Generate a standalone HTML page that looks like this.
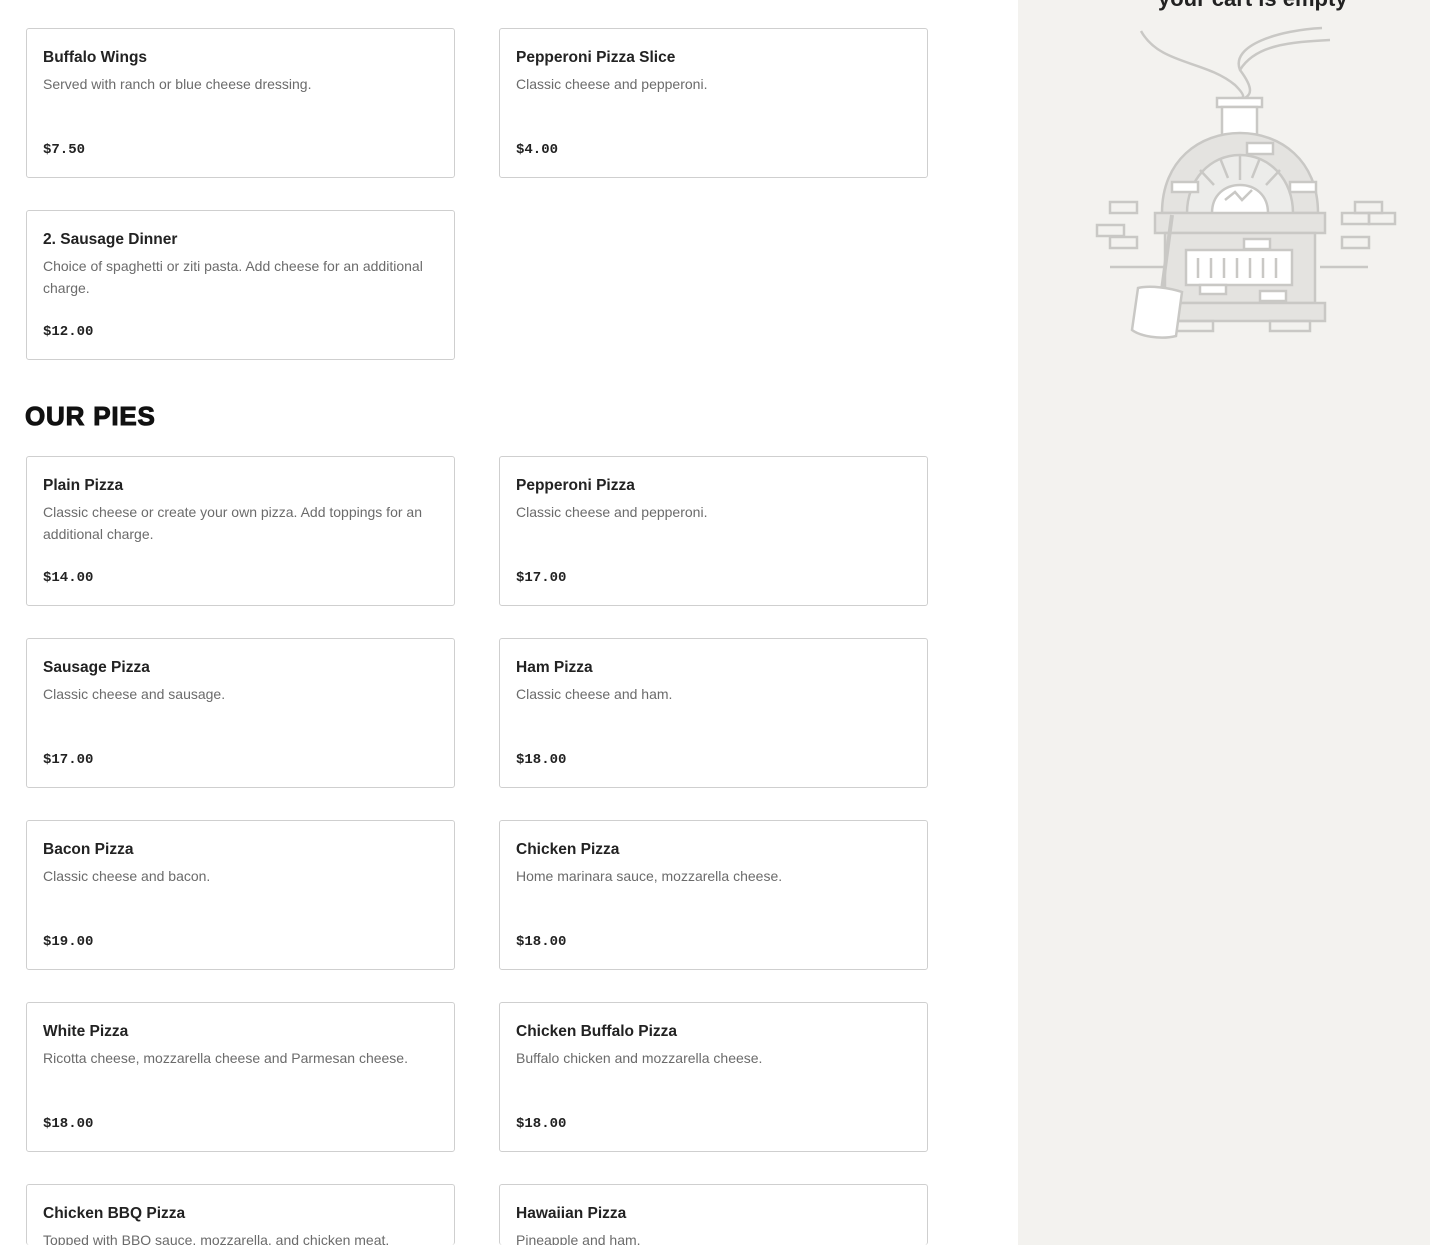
<!DOCTYPE html>
<html style="width:1430px;height:1245px;overflow:hidden"><head><meta charset="utf-8"><style>
*{box-sizing:border-box;margin:0;padding:0}
body{width:1430px;height:1245px;overflow:hidden;background:#fff;font-family:"Liberation Sans",sans-serif;position:relative}
.card{position:absolute;width:429px;height:150px;border:1px solid #cfcfcf;border-radius:3px;background:#fff}
.card h3{position:absolute;left:16px;top:20px;font-size:15.5px;font-weight:bold;color:#222}
.card p{position:absolute;left:16px;top:44px;right:14px;font-size:14px;line-height:22px;color:#6b6b6b}
.card .pr{position:absolute;left:16px;top:113px;font-family:"Liberation Mono",monospace;font-weight:bold;font-size:14px;color:#222}
.side{position:absolute;left:1018px;top:0;width:412px;height:1245px;background:#f3f2ef}
h2{position:absolute;left:25px;top:401px;font-size:26px;font-weight:900;color:#111;letter-spacing:0.8px;-webkit-text-stroke:1px #111}
</style></head><body>
<div class="side">
<div style="position:absolute;left:140px;top:-14px;font-size:22px;font-weight:bold;color:#222">your cart is empty</div>
<svg style="position:absolute;left:72px;top:0" width="320" height="350" viewBox="1090 0 320 350" fill="none" stroke="#c9c8c5" stroke-width="2.5">
<path d="M1141 31 C1160 65 1205 60 1235 85 C1250 100 1240 98 1238 98"/>
<path d="M1322 28 C1280 30 1230 45 1240 70 C1255 90 1250 95 1245 98"/>
<path d="M1240 70 C1255 45 1290 42 1330 40"/>
<rect x="1217" y="98" width="45" height="9" fill="#fff"/>
<rect x="1222" y="107" width="35" height="28" fill="#fff"/>
<path d="M1162 213 C1162 160 1200 133 1240 133 C1280 133 1318 160 1318 213 Z" fill="#e4e3e0"/>
<path d="M1187 213 C1187 180 1210 155 1240 155 C1270 155 1293 180 1293 213" fill="#ececea"/>
<path d="M1212 213 C1212 195 1225 185 1240 185 C1255 185 1268 195 1268 213" fill="#fff"/>
<path d="M1225 200 L1235 192 L1242 200 L1252 190"/>
<path d="M1200 170 L1214 185 M1220 158 L1228 178 M1240 155 L1240 180 M1260 158 L1252 178 M1280 170 L1266 185"/>
<rect x="1247" y="143" width="26" height="11" fill="#fff"/>
<rect x="1172" y="182" width="26" height="10" fill="#fff"/><rect x="1290" y="182" width="26" height="10" fill="#fff"/>
<rect x="1155" y="213" width="170" height="20" fill="#e4e3e0"/>
<rect x="1165" y="233" width="150" height="70" fill="#e4e3e0"/>
<rect x="1186" y="250" width="106" height="35" fill="#fff"/>
<path d="M1198 258v20M1211 258v20M1224 258v20M1237 258v20M1250 258v20M1263 258v20M1276 258v20"/>
<rect x="1155" y="303" width="170" height="18" fill="#e4e3e0"/>
<rect x="1175" y="321" width="38" height="10"/><rect x="1270" y="321" width="40" height="10"/>
<rect x="1244" y="239" width="26" height="10" fill="#fff"/>
<rect x="1200" y="285" width="26" height="9" fill="#fff"/><rect x="1260" y="291" width="26" height="10" fill="#fff"/>
<path d="M1110 267h55M1320 267h48"/>
<rect x="1110" y="202" width="27" height="11"/><rect x="1097" y="225" width="27" height="11"/><rect x="1110" y="237" width="27" height="11"/>
<rect x="1355" y="202" width="27" height="11"/><rect x="1342" y="213" width="27" height="11"/><rect x="1369" y="213" width="26" height="11"/><rect x="1342" y="237" width="27" height="11"/>
<path d="M1172 215 L1162 290" stroke-width="4"/>
<path d="M1138 288 C1150 285 1170 288 1182 292 L1176 336 C1160 340 1140 336 1132 330 Z" fill="#fff"/>
</svg>
</div>

<div class="card" style="left:26px;top:28px"><h3>Buffalo Wings</h3><p>Served with ranch or blue cheese dressing.</p><div class="pr">$7.50</div></div>
<div class="card" style="left:499px;top:28px"><h3>Pepperoni Pizza Slice</h3><p>Classic cheese and pepperoni.</p><div class="pr">$4.00</div></div>
<div class="card" style="left:26px;top:210px"><h3>2. Sausage Dinner</h3><p>Choice of spaghetti or ziti pasta. Add cheese for an additional charge.</p><div class="pr">$12.00</div></div>

<h2>OUR PIES</h2>

<div class="card" style="left:26px;top:456px"><h3>Plain Pizza</h3><p>Classic cheese or create your own pizza. Add toppings for an additional charge.</p><div class="pr">$14.00</div></div>
<div class="card" style="left:499px;top:456px"><h3>Pepperoni Pizza</h3><p>Classic cheese and pepperoni.</p><div class="pr">$17.00</div></div>
<div class="card" style="left:26px;top:638px"><h3>Sausage Pizza</h3><p>Classic cheese and sausage.</p><div class="pr">$17.00</div></div>
<div class="card" style="left:499px;top:638px"><h3>Ham Pizza</h3><p>Classic cheese and ham.</p><div class="pr">$18.00</div></div>
<div class="card" style="left:26px;top:820px"><h3>Bacon Pizza</h3><p>Classic cheese and bacon.</p><div class="pr">$19.00</div></div>
<div class="card" style="left:499px;top:820px"><h3>Chicken Pizza</h3><p>Home marinara sauce, mozzarella cheese.</p><div class="pr">$18.00</div></div>
<div class="card" style="left:26px;top:1002px"><h3>White Pizza</h3><p>Ricotta cheese, mozzarella cheese and Parmesan cheese.</p><div class="pr">$18.00</div></div>
<div class="card" style="left:499px;top:1002px"><h3>Chicken Buffalo Pizza</h3><p>Buffalo chicken and mozzarella cheese.</p><div class="pr">$18.00</div></div>
<div class="card" style="left:26px;top:1184px;height:61px;border-bottom:none"><h3>Chicken BBQ Pizza</h3><p>Topped with BBQ sauce, mozzarella, and chicken meat.</p></div>
<div class="card" style="left:499px;top:1184px;height:61px;border-bottom:none"><h3>Hawaiian Pizza</h3><p>Pineapple and ham.</p></div>
</body></html>
